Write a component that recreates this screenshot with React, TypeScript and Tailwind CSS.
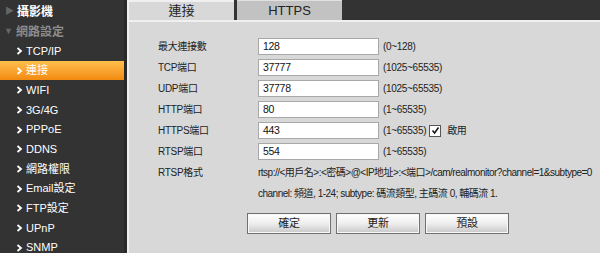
import React from "react";

const font = { fontFamily: '"Liberation Sans", "Noto Sans CJK TC", sans-serif' };

const menu = ["TCP/IP", "連接", "WIFI", "3G/4G", "PPPoE", "DDNS", "網路權限", "Email設定", "FTP設定", "UPnP", "SNMP"];

const rows = [
  { label: "最大連接數", value: "128", range: "(0~128)" },
  { label: "TCP端口", value: "37777", range: "(1025~65535)" },
  { label: "UDP端口", value: "37778", range: "(1025~65535)" },
  { label: "HTTP端口", value: "80", range: "(1~65535)" },
  { label: "HTTPS端口", value: "443", range: "(1~65535)", check: true },
  { label: "RTSP端口", value: "554", range: "(1~65535)" },
];

function Chevron() {
  return (
    <svg width="7" height="8" viewBox="0 0 7 8" className="shrink-0">
      <path d="M1.5 1 L5 4 L1.5 7" fill="none" stroke="currentColor" strokeWidth="1.8" />
    </svg>
  );
}

function Sidebar() {
  return (
    <div className="w-[124px] shrink-0 bg-[#333333] text-[11px] pt-[2px]">
      <div className="h-[20px] flex items-center pl-[5px] gap-[3px] text-white font-bold text-[12px]">
        <span className="text-[#666] text-[9px]">▶</span>
        攝影機
      </div>
      <div className="h-[19px] flex items-center pl-[4px] gap-[3px] text-[#8c8c8c] font-bold text-[12px]">
        <span className="text-[#666] text-[9px]">▼</span>
        網路設定
      </div>
      {menu.map((m) => (
        <div
          key={m}
          className={
            "h-[19.7px] flex items-center pl-[16px] gap-[3px] " +
            (m === "連接"
              ? "bg-gradient-to-b from-[#ffc04a] to-[#f28a0c] text-white"
              : "text-white")
          }
        >
          <Chevron />
          <span>{m}</span>
        </div>
      ))}
    </div>
  );
}

function Field({ r }: { r: (typeof rows)[number] }) {
  return (
    <div className="h-[21px] flex items-center">
      <div className="w-[129px] pl-[29px] text-[#222]">{r.label}</div>
      <div className="w-[121px] h-[17px] bg-white border border-[#a8a8a8] flex items-center px-[4px] text-[#111] text-[10.5px]">
        {r.value}
      </div>
      <div className="pl-[4px] text-[#222]">{r.range}</div>
      {r.check && (
        <div className="flex items-center ml-[3px] gap-[6px]">
          <div className="w-[12px] h-[12px] bg-white border border-[#555] flex items-center justify-center">
            <svg width="9" height="9" viewBox="0 0 9 9">
              <path d="M1.5 4.5 L3.6 7 L7.5 1.5" fill="none" stroke="#111" strokeWidth="1.5" />
            </svg>
          </div>
          <span className="text-[#222]">啟用</span>
        </div>
      )}
    </div>
  );
}

function Btn({ t }: { t: string }) {
  return (
    <div className="w-[84px] h-[21px] flex items-center justify-center border border-[#707070] bg-gradient-to-b from-[#ffffff] via-[#eeeeee] to-[#c8c8c8] text-[#222] text-[11px] shadow-[inset_0_0_0_1px_#f8f8f8]">
      {t}
    </div>
  );
}

export default function App() {
  return (
    <div className="w-[600px] h-[253px] flex bg-[#333333] overflow-hidden" style={font}>
      <Sidebar />
      <div className="w-[3px] bg-[#2a2a2a]" />
      <div className="flex-1 flex flex-col">
        <div className="h-[20px] flex bg-[#333333]">
          <div className="w-[107px] bg-[#d8d8d8] border-l-2 border-t-2 border-[#f0f0f0] flex items-center justify-center text-[13px] text-[#222]">
            連接
          </div>
          <div className="w-[3px]" />
          <div className="w-[105px] bg-[#c2c2c2] border-t border-[#e0e0e0] flex items-center justify-center text-[13px] text-[#222]">
            HTTPS
          </div>
        </div>
        <div className="flex-1 bg-[#d8d8d8] border-l-2 border-t-2 border-[#f0f0f0] text-[10px] tracking-[-0.3px] pt-[14px]">
          {rows.map((r) => (
            <Field key={r.label} r={r} />
          ))}
          <div className="h-[21px] flex items-center">
            <div className="w-[129px] pl-[29px] text-[#222]">RTSP格式</div>
            <div className="text-[#222] tracking-[-0.5px] whitespace-nowrap">
              rtsp://&lt;用戶名&gt;:&lt;密碼&gt;@&lt;IP地址&gt;:&lt;端口&gt;/cam/realmonitor?channel=1&amp;subtype=0
            </div>
          </div>
          <div className="h-[21px] flex items-center">
            <div className="w-[129px]" />
            <div className="text-[#222] tracking-[-0.5px] whitespace-nowrap">
              channel: 頻道, 1-24; subtype: 碼流類型, 主碼流 0, 輔碼流 1.
            </div>
          </div>
          <div className="flex gap-[5px] pl-[118px] mt-[9px]">
            <Btn t="確定" />
            <Btn t="更新" />
            <Btn t="預設" />
          </div>
        </div>
      </div>
    </div>
  );
}
